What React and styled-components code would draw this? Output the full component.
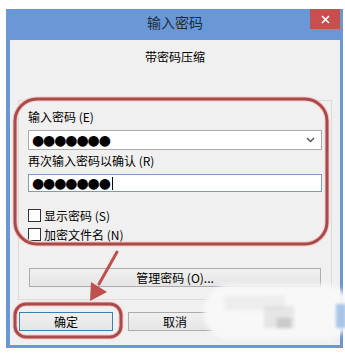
import React from 'react';
import styled, { createGlobalStyle } from 'styled-components';

const Global = createGlobalStyle`
  html, body {
    margin: 0;
    padding: 0;
    background: #ffffff;
  }
  body {
    font-family: "Noto Sans CJK SC", "Liberation Sans", sans-serif;
    font-size: 12px;
    color: #000;
  }
`

const Page = styled.div`
  position: relative;
  width: 345px;
  height: 353px;
  padding: 9px 0 0 6px;
  box-sizing: border-box;
  overflow: hidden;
`

const Window = styled.div`
  width: 337px;
  height: 339px;
  background: #6a98d6;
  display: flex;
  flex-direction: column;
  padding: 0 3px 3px 4px;
  box-sizing: border-box;
`

const TitleBar = styled.div`
  height: 31px;
  display: grid;
  grid-template-columns: 34px 1fr 34px;
  align-items: start;
`

const Title = styled.div`
  grid-column: 2;
  text-align: center;
  font-size: 14px;
  line-height: 26px;
  color: #1e2b3c;
`

const Close = styled.div`
  grid-column: 3;
  justify-self: end;
  width: 30px;
  height: 20px;
  background: #c7504f;
  color: #fff;
  display: flex;
  align-items: center;
  justify-content: center;
`

const Client = styled.div`
  flex: 1;
  background: #f0f0f0;
  display: flex;
  flex-direction: column;
  padding: 0 8px 0 8px;
`

const Heading = styled.div`
  text-align: center;
  line-height: 16px;
  padding-top: 9px;
  height: 60px;
  box-sizing: border-box;
`

const Group = styled.div`
  border: 1px solid #dcdcdc;
  height: 200px;
  box-sizing: border-box;
  padding: 9px 9px 0 9px;
  display: flex;
  flex-direction: column;
`

const Label = styled.div`
  line-height: 14px;
  height: 14px;
  margin-bottom: 6px;
`

const Field = styled.div`
  height: ${p => p.$h}px;
  border: 1px solid ${p => p.$focus ? '#7a9cc2' : '#acacac'};
  background: #fff;
  box-sizing: border-box;
  display: flex;
  align-items: center;
  padding: 0 6px 0 3px;
  margin-bottom: ${p => p.$mb}px;
`

const Dots = styled.span`
  font-family: "DejaVu Sans", sans-serif;
  font-size: 14px;
  letter-spacing: -1.1px;
  line-height: 1;
  flex: 1;
  display: flex;
  align-items: center;
`

const Caret = styled.span`
  display: inline-block;
  width: 1px;
  height: 13px;
  background: #000;
  margin-left: 2px;
`

const Check = styled.label`
  display: flex;
  align-items: center;
  gap: 3px;
  height: 14px;
  margin-bottom: ${p => p.$mb}px;
`

const Box = styled.span`
  width: 13px;
  height: 13px;
  border: 1px solid #333;
  background: #fff;
  box-sizing: border-box;
`

const Button = styled.div`
  height: 19px;
  box-sizing: border-box;
  border: 1px solid ${p => p.$def ? '#3c7fb1' : '#acacac'};
  background: linear-gradient(#f0f0f0, #e5e5e5);
  display: flex;
  align-items: center;
  justify-content: center;
  line-height: 14px;
`

const Manage = styled(Button)`
  margin: 27px 1px 0 1px;
`

const Footer = styled.div`
  display: grid;
  grid-template-columns: repeat(3, 94px);
  gap: 15px;
  padding: 12px 0 0 1px;
`

const Overlay = styled.svg`
  position: absolute;
  left: 0;
  top: 0;
  pointer-events: none;
`

const Watermark = styled.div`
  position: absolute;
  left: 204px;
  top: 284px;
  width: 146px;
  height: 56px;
  border-radius: 26px;
  background: rgba(248, 248, 248, 0.97);
  filter: blur(2px);
`

const Blot = styled.div`
  position: absolute;
  left: ${p => p.$x}px;
  top: ${p => p.$y}px;
  width: ${p => p.$w}px;
  height: ${p => p.$h}px;
  background: ${p => p.$c};
  filter: blur(1.5px);
`

export default function App() {
  return (
    <>
      <Global />
      <Page>
        <Window>
          <TitleBar>
            <Title>输入密码</Title>
            <Close>
              <svg width="9" height="9" viewBox="0 0 9 9">
                <path d="M1 1L8 8M8 1L1 8" stroke="#fff" strokeWidth="1.6" />
              </svg>
            </Close>
          </TitleBar>
          <Client>
            <Heading>带密码压缩</Heading>
            <Group>
              <Label>输入密码 (E)</Label>
              <Field $h={20} $mb={4}>
                <Dots>●●●●●●●</Dots>
                <svg width="9" height="6" viewBox="0 0 9 6">
                  <path d="M1 1L4.5 4.5L8 1" fill="none" stroke="#555" strokeWidth="1.5" />
                </svg>
              </Field>
              <Label>再次输入密码以确认 (R)</Label>
              <Field $h={18} $mb={16} $focus>
                <Dots>●●●●●●●<Caret /></Dots>
              </Field>
              <Check $mb={5}><Box />显示密码 (S)</Check>
              <Check $mb={0}><Box />加密文件名 (N)</Check>
              <Manage>管理密码 (O)...</Manage>
            </Group>
            <Footer>
              <Button $def>确定</Button>
              <Button>取消</Button>
              <Button>帮助</Button>
            </Footer>
          </Client>
        </Window>
        <Watermark />
        <Blot $x={225} $y={296} $w={60} $h={14} $c="rgba(232,232,232,0.7)" />
        <Blot $x={264} $y={306} $w={30} $h={22} $c="rgba(215,215,215,0.55)" />
        <Blot $x={277} $y={318} $w={14} $h={10} $c="rgba(185,185,185,0.6)" />
        <Blot $x={336} $y={304} $w={10} $h={24} $c="rgba(150,185,225,0.8)" />
        <Overlay width="345" height="353" viewBox="0 0 345 353">
          <rect x="15" y="99" width="312" height="145" rx="22" fill="none" stroke="#f4c7c7" strokeWidth="5" />
          <rect x="15" y="99" width="312" height="145" rx="22" fill="none" stroke="#a84a4a" strokeWidth="3" />
          <rect x="15" y="304" width="106" height="33" rx="11" fill="none" stroke="#f4c7c7" strokeWidth="5" />
          <rect x="15" y="304" width="106" height="33" rx="11" fill="none" stroke="#a84a4a" strokeWidth="3" />
          <path d="M117 252L99 284" stroke="#c0504d" strokeWidth="3" strokeLinecap="round" />
          <path d="M91 282L107 292L90 301Z" fill="#c0504d" />
        </Overlay>
      </Page>
    </>
  );
}
